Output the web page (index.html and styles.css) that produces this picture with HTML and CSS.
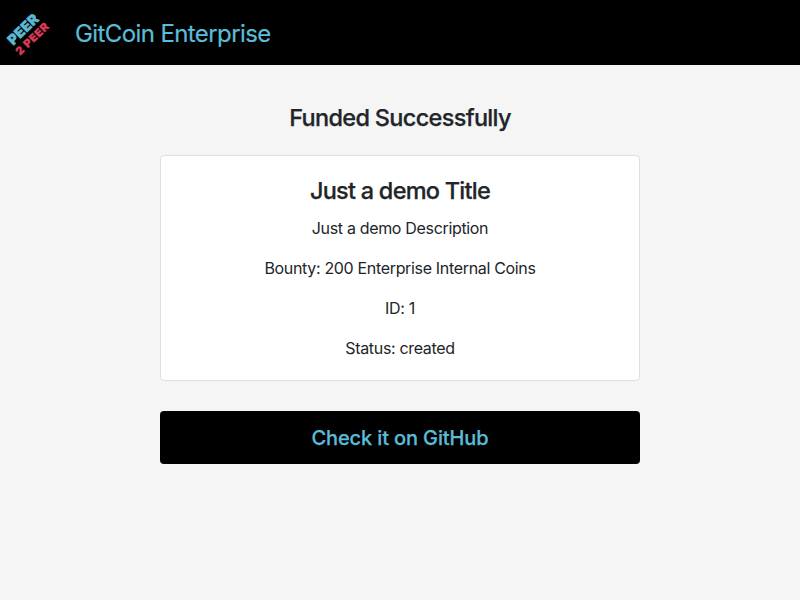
FILE: index.html
```html
<!DOCTYPE html>
<html lang="en">
<head>
<meta charset="utf-8">
<title>GitCoin Enterprise</title>
<link rel="stylesheet" href="styles.css">
</head>
<body>
<header class="topbar">
  <svg class="logo" viewBox="0 0 60 60" width="60" height="60" role="img" aria-label="Peer 2 Peer">
    <g transform="rotate(-44 30 30)">
      <text class="logo-peer" x="9" y="27.5" textLength="37" lengthAdjust="spacing">PEER</text>
      <text class="logo-two" x="7" y="39.5" textLength="41" lengthAdjust="spacing">2 PEER</text>
    </g>
  </svg>
  <span class="brand">GitCoin Enterprise</span>
</header>
<main class="content">
  <h1 class="heading">Funded Successfully</h1>
  <section class="card">
    <h2 class="title">Just a demo Title</h2>
    <p class="line description">Just a demo Description</p>
    <p class="line bounty">Bounty: 200 Enterprise Internal Coins</p>
    <p class="line ident">ID: 1</p>
    <p class="line status">Status: created</p>
  </section>
  <a class="button" href="#"><span class="label">Check it on GitHub</span></a>
</main>
</body>
</html>
```
FILE: styles.css
```css
* { box-sizing: border-box; }
body {
  margin: 0;
  background: #f5f5f5;
  color: #212529;
  font-family: Inter, "Liberation Sans", sans-serif;
  font-size: 16px;
  line-height: 24px;
}
.topbar {
  display: flex;
  align-items: center;
  height: 65px;
  background: #000;
}
.logo { flex: none; }
.logo-peer, .logo-two { font-family: Inter, sans-serif; font-weight: 900; }
.logo-peer { font-size: 14px; fill: #5bb8d2; stroke: #5bb8d2; stroke-width: 0.5px; }
.logo-two { font-size: 11px; fill: #d83a58; stroke: #d83a58; stroke-width: 0.3px; }
.brand {
  margin-left: 15px;
  padding-top: 2px;
  color: #5bbcd8;
  font-size: 24px;
  letter-spacing: -0.6px;
  line-height: 36px;
  -webkit-text-stroke: 0.2px #5bbcd8;
}
.content {
  width: 480px;
  margin: 0 auto;
  padding-top: 38px;
  text-align: center;
}
.heading, .title {
  margin: 0;
  font-size: 23.5px;
  font-weight: 500;
  line-height: 29px;
  -webkit-text-stroke: 0.25px #212529;
}
.heading { letter-spacing: -0.68px; }
.title { letter-spacing: -0.75px; }
.card {
  margin-top: 23px;
  height: 226px;
  padding: 20px;
  background: #fff;
  border: 1px solid #dfdfdf;
  border-radius: 4px;
}
.line { margin: 0 0 16px; letter-spacing: -0.33px; }
.description { margin-top: 11px; }
.button {
  display: flex;
  align-items: center;
  justify-content: center;
  height: 53px;
  margin-top: 30px;
  border-radius: 4px;
  background: #000;
  color: #5bbcd8;
  font-size: 20px;
  font-weight: 500;
  letter-spacing: -0.13px;
  text-decoration: none;
  -webkit-text-stroke: 0.25px #5bbcd8;
}
```
